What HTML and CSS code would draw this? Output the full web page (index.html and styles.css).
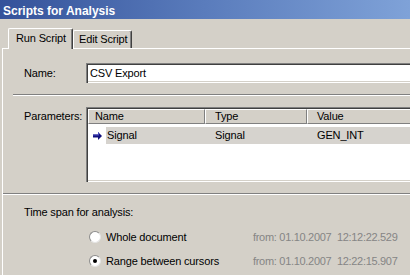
FILE: index.html
```html
<!DOCTYPE html>
<html>
<head>
<meta charset="utf-8">
<link rel="stylesheet" href="styles.css">
</head>
<body>
<div class="titlebar">Scripts for Analysis</div>
<div class="tabs">
  <div class="tab active">Run Script</div>
  <div class="tab">Edit Script</div>
</div>
<div class="panel">
  <div class="name-row">
    <span class="label">Name:</span>
    <div class="input">CSV Export</div>
  </div>
  <div class="sep sep1"></div>
  <div class="params-row">
    <span class="label label-top">Parameters:</span>
    <div class="list">
      <div class="list-head">
        <div class="hcell c1">Name</div>
        <div class="hcell c2">Type</div>
        <div class="hcell c3">Value</div>
      </div>
      <div class="list-row">
        <div class="cell c1">
          <svg class="arrow" width="9" height="8" viewBox="0 0 9 8"><path d="M0 2.5h5V0l4 4-4 4V5.5H0z" fill="#10107e"/><path d="M0 2.5h5V0l1 1v2.5H0z" fill="#4a4ac0"/></svg>
          <span class="sel">Signal</span>
        </div>
        <div class="cell c2 sel">Signal</div>
        <div class="cell c3 sel">GEN_INT</div>
      </div>
    </div>
  </div>
  <div class="sep sep2"></div>
  <div class="timespan">Time span for analysis:</div>
  <div class="radio-row first">
    <span class="radio"></span>
    <span class="rlabel">Whole document</span>
    <span class="from">from: 01.10.2007&nbsp; 12:12:22.529</span>
  </div>
  <div class="radio-row">
    <span class="radio checked"></span>
    <span class="rlabel">Range between cursors</span>
    <span class="from">from: 01.10.2007&nbsp; 12:22:15.907</span>
  </div>
</div>
</body>
</html>
```
FILE: styles.css
```css
* { box-sizing: border-box; }
body {
  margin: 0;
  width: 410px;
  height: 275px;
  overflow: hidden;
  background: #d4d0c8;
  font-family: "Liberation Sans", Arial, sans-serif;
  font-size: 11px;
  letter-spacing: -0.15px;
  color: #000;
}
.titlebar {
  height: 19px;
  padding: 3px 0 0 3px;
  line-height: 16px;
  font-size: 12px;
  font-weight: bold;
  letter-spacing: 0;
  color: #fff;
  background: linear-gradient(to right, #34529a, #5a7cbc 50%, #7fa2d8);
}
.tabs {
  display: flex;
  align-items: flex-end;
  height: 29px;
  padding-left: 8px;
  position: relative;
  z-index: 1;
}
.tab {
  background: #d4d0c8;
  border-top: 1px solid #fff;
  border-left: 1px solid #fff;
  border-right: 1px solid #404040;
  box-shadow: inset -1px 0 #808080;
  border-radius: 2px 2px 0 0;
  line-height: 13px;
  white-space: nowrap;
}
.tab.active {
  width: 65px;
  height: 21px;
  margin-bottom: -1px;
  padding: 3px 0 0 7px;
}
.tab:not(.active) {
  width: 59px;
  height: 18px;
  padding: 2px 0 0 5px;
}
.panel {
  margin-left: 2px;
  width: 408px;
  height: 228px;
  overflow: hidden;
  border-top: 1px solid #fff;
  border-left: 1px solid #fff;
}
.name-row {
  display: flex;
  align-items: center;
  margin-top: 14px;
}
.label {
  flex: none;
  width: 83px;
  padding-left: 21px;
  line-height: 13px;
}
.input {
  flex: none;
  width: 400px;
  height: 20px;
  padding-left: 4px;
  line-height: 20px;
  background: #fff;
  box-shadow: inset 1px 1px #808080, inset 2px 2px #404040, inset -1px -1px #fff, inset -2px -2px #d4d0c8;
}
.sep {
  height: 2px;
  border-top: 1px solid #808080;
  border-bottom: 1px solid #fff;
}
.sep1 { margin: 11px 0 0 10px; }
.sep2 { margin-top: 11px; }
.params-row {
  display: flex;
  align-items: flex-start;
  margin-top: 11px;
}
.label-top { padding-top: 3px; }
.list {
  flex: none;
  width: 400px;
  height: 75px;
  padding: 2px;
  background: #fff;
  box-shadow: inset 1px 1px #808080, inset 2px 2px #404040, inset -1px -1px #fff, inset -2px -2px #d4d0c8;
}
.list-head {
  display: flex;
  height: 15px;
}
.hcell {
  background: #d4d0c8;
  border-top: 1px solid #fff;
  border-left: 1px solid #fff;
  border-right: 1px solid #808080;
  border-bottom: 1px solid #808080;
  line-height: 13px;
  padding-left: 6px;
}
.c1 { flex: none; width: 117px; }
.c2 { flex: none; width: 102px; }
.c3 { flex: 1; }
.hcell.c2, .hcell.c3 { padding-left: 9px; }
.list-row {
  display: flex;
  height: 17px;
  margin-top: 3px;
  line-height: 17px;
}
.cell { height: 17px; }
.cell.c1 { display: flex; align-items: center; padding-left: 5px; }
.arrow { flex: none; margin-right: 4px; }
.sel { background: #d6d3ce; }
.cell.c1 .sel { flex: 1; padding-left: 1px; line-height: 17px; }
.cell.c2, .cell.c3 { padding-left: 10px; }
.timespan {
  margin-top: 11px;
  padding-left: 21px;
  line-height: 13px;
}
.radio-row {
  display: flex;
  align-items: center;
  height: 24px;
  padding-left: 86px;
  line-height: 13px;
}
.radio-row.first { margin-top: 6px; }
.radio {
  flex: none;
  width: 12px;
  height: 12px;
  margin-right: 5px;
  border-radius: 50%;
  background: #fff;
  border: 1px solid;
  border-color: #8c8c8c #e4e4e4 #e4e4e4 #8c8c8c;
  display: flex;
  align-items: center;
  justify-content: center;
}
.radio.checked::after {
  content: "";
  width: 4px;
  height: 4px;
  border-radius: 50%;
  background: #000;
}
.rlabel { flex: none; width: 147px; white-space: nowrap; }
.from { color: #858585; white-space: nowrap; letter-spacing: -0.3px; }
```
